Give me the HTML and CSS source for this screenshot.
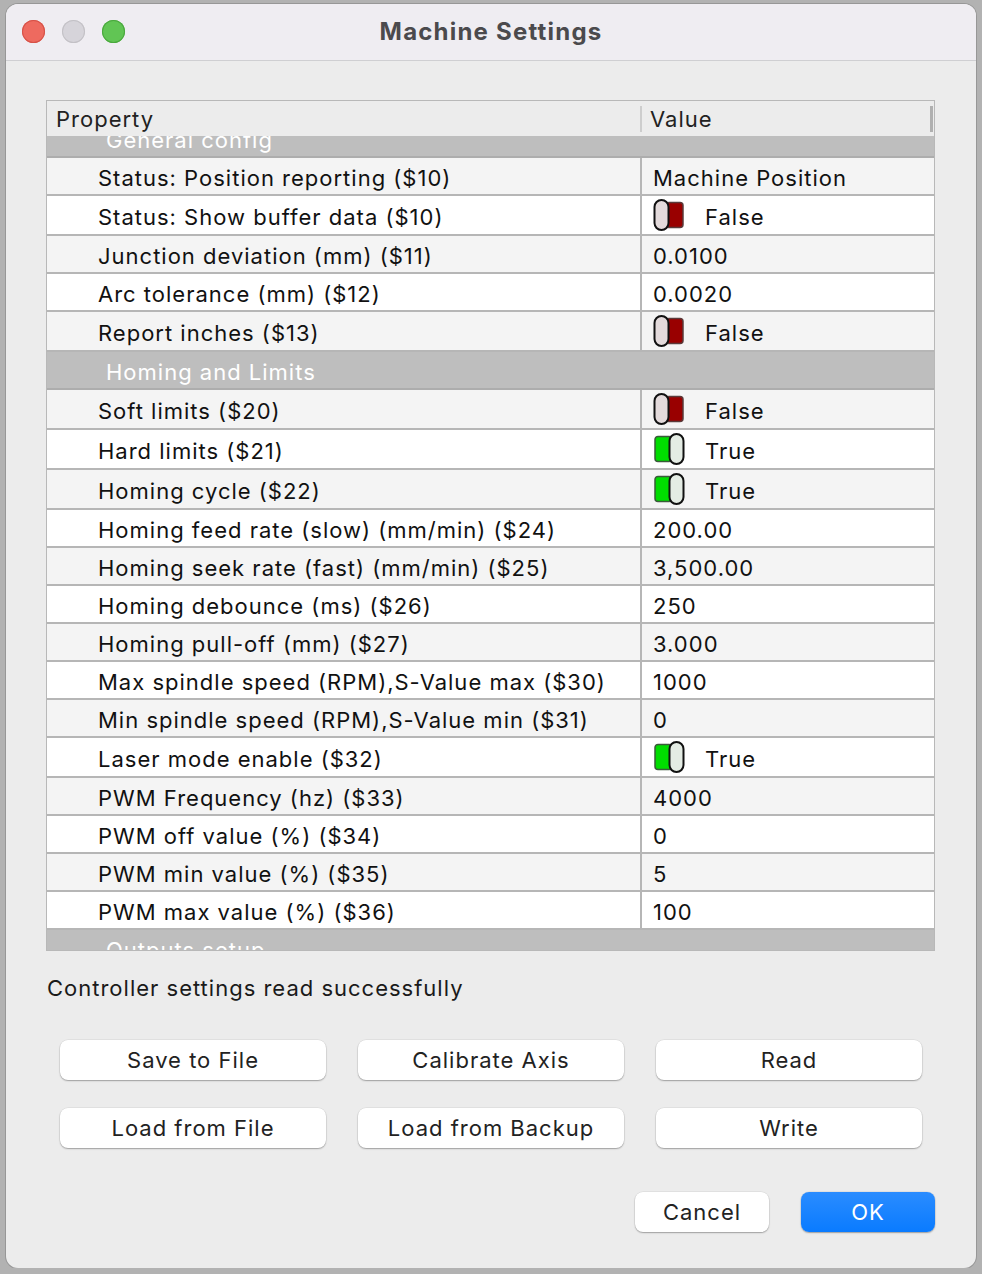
FILE: index.html
```html
<!DOCTYPE html>
<html lang="en">
<head>
  <meta charset="UTF-8">
  <title>Machine Settings</title>
  <link rel="stylesheet" href="styles.css">
</head>
<body>
  <div class="window">
    <!-- Title bar -->
    <div class="titlebar">
      <div class="lights">
        <span class="light red"></span>
        <span class="light gray"></span>
        <span class="light green"></span>
      </div>
      <h1>Machine Settings</h1>
    </div>

    <div class="content">
      <div class="table">
        <div class="head">
          <div class="hcell prop">Property</div>
          <div class="hcell val">Value</div>
        </div>
        <div class="viewport">
          <div class="rows">
            <div class="section">General config</div>
            <div class="row"><div class="cell prop">Status: Position reporting ($10)</div><div class="cell val">Machine Position</div></div>
            <div class="row alt tall"><div class="cell prop">Status: Show buffer data ($10)</div><div class="cell val"><svg class="toggle" viewBox="0 0 32 32"><rect x="13" y="3.5" width="17" height="25" rx="3" fill="#990000" stroke="#5a3a3a" stroke-width="1.5"/><rect x="1.5" y="1" width="14" height="30" rx="7" fill="#e3dadb" stroke="#111" stroke-width="2"/></svg>False</div></div>
            <div class="row"><div class="cell prop">Junction deviation (mm) ($11)</div><div class="cell val">0.0100</div></div>
            <div class="row alt"><div class="cell prop">Arc tolerance (mm) ($12)</div><div class="cell val">0.0020</div></div>
            <div class="row tall"><div class="cell prop">Report inches ($13)</div><div class="cell val"><svg class="toggle" viewBox="0 0 32 32"><rect x="13" y="3.5" width="17" height="25" rx="3" fill="#990000" stroke="#5a3a3a" stroke-width="1.5"/><rect x="1.5" y="1" width="14" height="30" rx="7" fill="#e3dadb" stroke="#111" stroke-width="2"/></svg>False</div></div>

            <div class="section">Homing and Limits</div>
            <div class="row tall"><div class="cell prop">Soft limits ($20)</div><div class="cell val"><svg class="toggle" viewBox="0 0 32 32"><rect x="13" y="3.5" width="17" height="25" rx="3" fill="#990000" stroke="#5a3a3a" stroke-width="1.5"/><rect x="1.5" y="1" width="14" height="30" rx="7" fill="#e3dadb" stroke="#111" stroke-width="2"/></svg>False</div></div>
            <div class="row alt tall"><div class="cell prop">Hard limits ($21)</div><div class="cell val"><svg class="toggle" viewBox="0 0 32 32"><rect x="2" y="3.5" width="17" height="25" rx="3" fill="#00dd00" stroke="#3a5a3a" stroke-width="1.5"/><rect x="16.5" y="1" width="14" height="30" rx="7" fill="#e4ece4" stroke="#111" stroke-width="2"/></svg>True</div></div>
            <div class="row tall"><div class="cell prop">Homing cycle ($22)</div><div class="cell val"><svg class="toggle" viewBox="0 0 32 32"><rect x="2" y="3.5" width="17" height="25" rx="3" fill="#00dd00" stroke="#3a5a3a" stroke-width="1.5"/><rect x="16.5" y="1" width="14" height="30" rx="7" fill="#e4ece4" stroke="#111" stroke-width="2"/></svg>True</div></div>
            <div class="row alt"><div class="cell prop">Homing feed rate (slow) (mm/min) ($24)</div><div class="cell val">200.00</div></div>
            <div class="row"><div class="cell prop">Homing seek rate (fast) (mm/min) ($25)</div><div class="cell val">3,500.00</div></div>
            <div class="row alt"><div class="cell prop">Homing debounce (ms) ($26)</div><div class="cell val">250</div></div>
            <div class="row"><div class="cell prop">Homing pull-off (mm) ($27)</div><div class="cell val">3.000</div></div>
            <div class="row alt"><div class="cell prop">Max spindle speed (RPM),S-Value max ($30)</div><div class="cell val">1000</div></div>
            <div class="row"><div class="cell prop">Min spindle speed (RPM),S-Value min ($31)</div><div class="cell val">0</div></div>
            <div class="row alt tall"><div class="cell prop">Laser mode enable ($32)</div><div class="cell val"><svg class="toggle" viewBox="0 0 32 32"><rect x="2" y="3.5" width="17" height="25" rx="3" fill="#00dd00" stroke="#3a5a3a" stroke-width="1.5"/><rect x="16.5" y="1" width="14" height="30" rx="7" fill="#e4ece4" stroke="#111" stroke-width="2"/></svg>True</div></div>
            <div class="row"><div class="cell prop">PWM Frequency (hz) ($33)</div><div class="cell val">4000</div></div>
            <div class="row alt"><div class="cell prop">PWM off value (%) ($34)</div><div class="cell val">0</div></div>
            <div class="row"><div class="cell prop">PWM min value (%) ($35)</div><div class="cell val">5</div></div>
            <div class="row alt"><div class="cell prop">PWM max value (%) ($36)</div><div class="cell val">100</div></div>

            <div class="section">Outputs setup</div>
          </div>
        </div>
      </div>

      <p class="status">Controller settings read successfully</p>

      <div class="actions">
        <button class="btn">Save to File</button>
        <button class="btn">Calibrate Axis</button>
        <button class="btn">Read</button>
        <button class="btn">Load from File</button>
        <button class="btn">Load from Backup</button>
        <button class="btn">Write</button>
      </div>

      <div class="footer">
        <button class="btn small">Cancel</button>
        <button class="btn small primary">OK</button>
      </div>
    </div>
  </div>
</body>
</html>
```

FILE: styles.css
```css
body {
  margin: 0;
  padding: 4px 6px 0 6px;
  background-color: #b2b2b2;
  font-family: Inter, "Noto Sans", sans-serif;
  color: #111;
  letter-spacing: 1px;
}

.window {
  width: 970px;
  height: 1264px;
  background-color: #ececec;
  border-radius: 12px;
  overflow: hidden;
  box-shadow: 0 0 0 1px rgba(0,0,0,0.15);
  display: flex;
  flex-direction: column;
}

/* Title bar */
.titlebar {
  height: 56px;
  background-color: #efedf2;
  border-bottom: 1px solid #cfcfd2;
  display: flex;
  align-items: center;
  justify-content: center;
  position: relative;
}

.lights {
  position: absolute;
  left: 16px;
  top: 16px;
  display: flex;
  gap: 17px;
}

.light {
  width: 23px;
  height: 23px;
  border-radius: 50%;
}

.light.red { background-color: #ee6a5f; box-shadow: inset 0 0 0 1px #d65248; }
.light.gray { background-color: #d6d4da; box-shadow: inset 0 0 0 1px #c3c1c6; }
.light.green { background-color: #61c554; box-shadow: inset 0 0 0 1px #4aa83e; }

.titlebar h1 {
  margin: 0 0 2px 0;
  font-size: 24px;
  font-weight: 700;
  color: #4b4a4d;
  letter-spacing: 1.2px;
}

.content {
  padding: 39px 40px 0 40px;
  display: flex;
  flex-direction: column;
}

/* Property table */
.table {
  width: 887px;
  border: 1px solid #b8b8b8;
  background-color: #ececec;
}

.head {
  height: 35px;
  display: grid;
  grid-template-columns: 595px 1fr;
  align-items: center;
  font-size: 22px;
  color: #222;
}

.hcell.prop {
  padding-left: 9px;
  border-right: 2px solid #cdcdcd;
  line-height: 26px;
}

.hcell.val {
  padding-left: 8px;
  border-right: 3px solid #b0b0b0;
  line-height: 26px;
  margin-right: 1px;
}

.viewport {
  height: 814px;
  overflow: hidden;
  background-color: #bdbdbd;
}

.rows {
  margin-top: -16px;
}

.section {
  height: 38px;
  box-sizing: border-box;
  border-bottom: 2px solid #adadad;
  background-color: #bebebe;
  color: #fff;
  font-size: 22px;
  padding: 4px 0 0 59px;
  display: flex;
  align-items: center;
}

.row {
  height: 38px;
  box-sizing: border-box;
  display: grid;
  grid-template-columns: 595px 1fr;
  background-color: #f4f4f4;
  border-bottom: 2px solid #b6b6b6;
  font-size: 22px;
}

.row.alt {
  background-color: #fff;
}

.row.tall {
  height: 40px;
}

.cell {
  display: flex;
  align-items: center;
  padding-top: 4px;
}

.cell.prop {
  padding-left: 51px;
  border-right: 2px solid #b6b6b6;
}

.cell.val {
  padding-left: 11px;
}

.toggle {
  width: 32px;
  height: 32px;
  margin: -4px 20px 0 0;
}

.status {
  margin: 24px 0 0 1px;
  font-size: 22px;
  line-height: 26px;
  color: #1a1a1a;
}

/* Buttons */
.actions {
  margin: 39px 0 0 14px;
  display: grid;
  grid-template-columns: repeat(3, 266px);
  column-gap: 32px;
  row-gap: 28px;
}

.btn {
  height: 40px;
  border: none;
  border-radius: 8px;
  background-color: #fff;
  box-shadow: 0 1px 1.5px rgba(0,0,0,0.3), 0 0 0 0.5px rgba(0,0,0,0.08);
  font-family: Inter, "Noto Sans", sans-serif;
  font-size: 22px;
  letter-spacing: 1px;
  color: #222;
  cursor: pointer;
}

.footer {
  margin-top: 44px;
  display: flex;
  justify-content: flex-end;
  gap: 32px;
  padding-right: 1px;
}

.btn.small {
  width: 134px;
}

.btn.primary {
  background: linear-gradient(#2a8cff, #0a7bff);
  color: #fff;
}
```
